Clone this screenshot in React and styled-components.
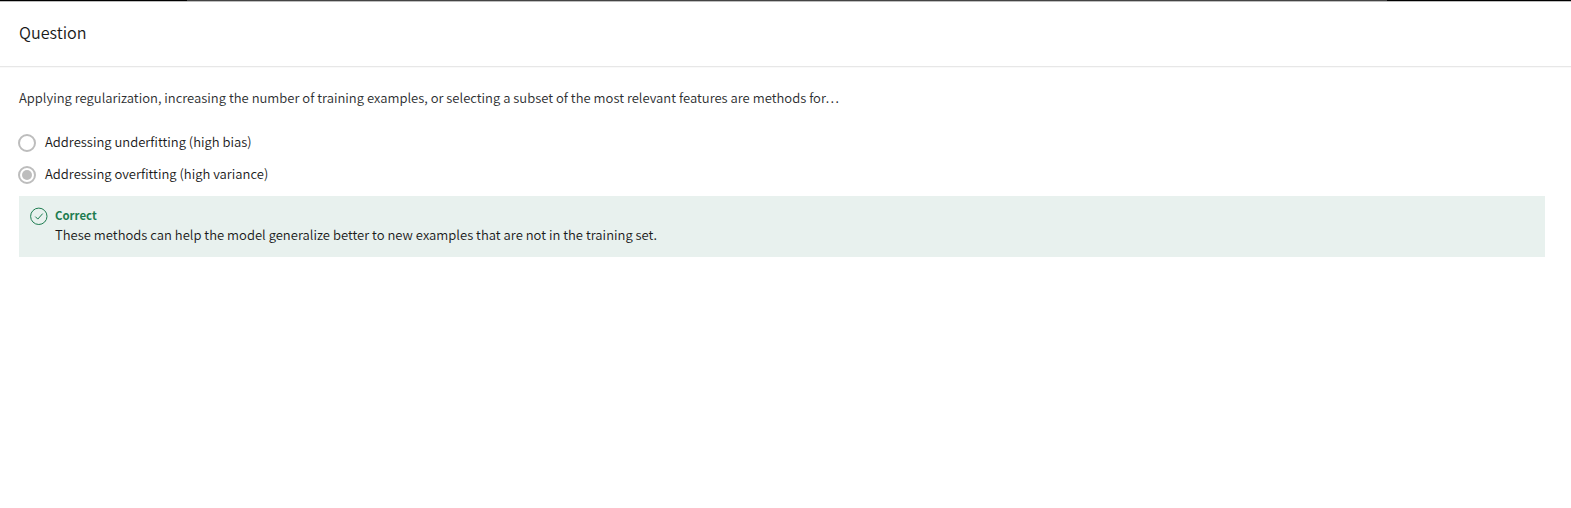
import React from "react";
import styled, { createGlobalStyle } from "styled-components";

const GlobalStyle = createGlobalStyle`
  * { box-sizing: border-box; }
  body {
    margin: 0;
    background: #fff;
    color: #1a1a1a;
    font: 350 13.04px/20px "Noto Sans CJK SC DemiLight", "Noto Sans CJK SC", "Open Sans", sans-serif;
  }
`;

const Page = styled.main`
  min-height: 508px;
  overflow: hidden;
  background: #fff;
`;

const TopEdge = styled.div`
  height: 2px;
  border-bottom: 1px solid #bdbdbd;
  background: linear-gradient(to right, #000 187px, #444 187px, #444 1387px, #000 1387px);
`;

const Header = styled.header`
  height: 65px;
  padding: 18px 19px 0;
  border-bottom: 1px solid #e7e7e7;
  box-shadow: 0 1px 0 #f9f9f9;
`;

const Title = styled.h1`
  margin: 0;
  width: max-content;
  font-size: 16.2px;
  font-weight: 350;
  line-height: 24px;
`;

const Content = styled.section`
  padding: 20px 26px 0 19px;
`;

const Prompt = styled.p`
  margin: 0 0 18px;
  width: max-content;
  line-height: 22px;
  color: #2c2e30;
`;

const Options = styled.div`
  display: flex;
  flex-direction: column;
  margin-left: -1px;
`;

const Option = styled.label`
  display: flex;
  align-items: center;
  gap: 9px;
  height: 32px;
`;

const Radio = styled.span`
  display: grid;
  place-items: center;
  width: 18px;
  height: 18px;
  border: 2px solid #bdbdbd;
  border-radius: 50%;

  &::after {
    content: "";
    width: 10px;
    height: 10px;
    border-radius: 50%;
    background: ${({ $selected }) => ($selected ? "#bdbdbd" : "transparent")};
  }
`;

const OptionText = styled.span`
  padding-bottom: 2px;
  white-space: nowrap;
`;

const Feedback = styled.section`
  display: flex;
  gap: 7px;
  height: 61px;
  margin-top: 5px;
  padding: 9px 11px 0;
  background: #e8f1ee;
`;

const CheckIcon = styled.svg`
  flex: none;
  width: 18px;
  height: 18px;
  margin-top: 2px;
  fill: none;
  stroke: #1d7c50;
`;

const FeedbackTitle = styled.div`
  width: max-content;
  font-family: "Noto Sans CJK SC", "Open Sans", sans-serif;
  font-size: 11.4px;
  font-weight: 700;
  color: #1d7c50;
`;

const FeedbackText = styled.div`
  width: max-content;
`;

const options = [
  { text: "Addressing underfitting (high bias)", selected: false },
  { text: "Addressing overfitting (high variance)", selected: true },
];

export default function App() {
  return (
    <Page>
      <GlobalStyle />
      <TopEdge />
      <Header>
        <Title>Question</Title>
      </Header>
      <Content>
        <Prompt>
          Applying regularization, increasing the number of training examples, or selecting a subset of the most relevant features are methods for…
        </Prompt>
        <Options role="radiogroup">
          {options.map(({ text, selected }) => (
            <Option key={text} role="radio" aria-checked={selected}>
              <Radio $selected={selected} />
              <OptionText>{text}</OptionText>
            </Option>
          ))}
        </Options>
        <Feedback>
          <CheckIcon viewBox="0 0 18 18" aria-hidden="true">
            <circle cx="8.8" cy="9.3" r="8.2" strokeWidth="1" />
            <path d="M5.3 9.6 7.8 12.1 12.7 6.6" strokeWidth="1" />
          </CheckIcon>
          <div>
            <FeedbackTitle>Correct</FeedbackTitle>
            <FeedbackText>
              These methods can help the model generalize better to new examples that are not in the training set.
            </FeedbackText>
          </div>
        </Feedback>
      </Content>
    </Page>
  );
}
